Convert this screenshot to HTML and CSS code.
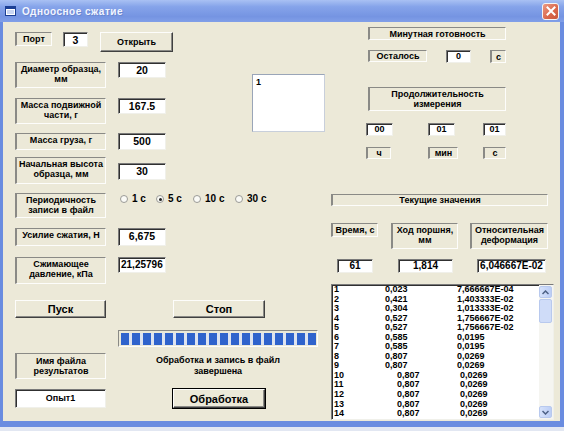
FILE: index.html
```html
<!DOCTYPE html>
<html lang="ru">
<head>
    <meta charset="UTF-8">
    <title>Одноосное сжатие</title>
    <link rel="stylesheet" href="styles.css">
</head>
<body>
<div class="window">
    <div class="titlebar">
        <svg class="app-icon" width="11" height="10" viewBox="0 0 11 10">
            <rect x="0.5" y="0.5" width="10" height="9" fill="#fff" stroke="#1c3f94"/>
            <rect x="1" y="1" width="9" height="2" fill="#1c3f94"/>
            <rect x="2" y="4" width="7" height="4" fill="#c9d6f3"/>
        </svg>
        <span class="title">Одноосное сжатие</span>
        <div class="close">
            <svg width="10" height="10" viewBox="0 0 10 10">
                <path d="M1.5 1.5 L8.5 8.5 M8.5 1.5 L1.5 8.5" stroke="#fff" stroke-width="2" stroke-linecap="square"/>
            </svg>
        </div>
    </div>

    <div class="client">
        <!-- left part: parameters, buttons, progress -->
        <div class="left-pane">
            <div class="row row-port">
                <div class="lbl lbl-port"><span>Порт</span></div>
                <div class="txt txt-port">3</div>
                <div class="btn btn-open">Открыть</div>
            </div>

            <div class="block-top">
                <div class="params">
                    <div class="row">
                        <div class="lbl param h26"><span>Диаметр образца,</span><span>мм</span></div>
                        <div class="txt field h16">20</div>
                    </div>
                    <div class="row mt10">
                        <div class="lbl param h26"><span>Масса подвижной</span><span>части, г</span></div>
                        <div class="txt field h16">167.5</div>
                    </div>
                    <div class="row mt9">
                        <div class="lbl param h17"><span>Масса груза, г</span></div>
                        <div class="txt field h17">500</div>
                    </div>
                </div>
                <div class="memo">1</div>
            </div>

            <div class="row mt7">
                <div class="lbl param h27"><span>Начальная высота</span><span>образца, мм</span></div>
                <div class="txt field h17 shift6">30</div>
            </div>
            <div class="row mt9">
                <div class="lbl param h25"><span>Периодичность</span><span>записи в файл</span></div>
                <div class="radios">
                    <span class="radio r1"><i class="dot"></i>1 с</span>
                    <span class="radio r2"><i class="dot checked"></i>5 с</span>
                    <span class="radio r3"><i class="dot"></i>10 с</span>
                    <span class="radio"><i class="dot"></i>30 с</span>
                </div>
            </div>
            <div class="row mt10">
                <div class="lbl param h18"><span>Усилие сжатия, Н</span></div>
                <div class="txt field h18">6,675</div>
            </div>
            <div class="row mt11">
                <div class="lbl param h27"><span>Сжимающее</span><span>давление, кПа</span></div>
                <div class="txt field h16 left">21,25796</div>
            </div>

            <div class="row row-run">
                <div class="btn btn-big btn-start">Пуск</div>
                <div class="btn btn-big btn-stop">Стоп</div>
            </div>

            <div class="row">
                <div class="col-file">
                    <div class="lbl param h26 file-lbl"><span>Имя файла</span><span>результатов</span></div>
                    <div class="txt file-name">Опыт1</div>
                </div>
                <div class="col-progress">
                    <div class="progress"><div class="progress-fill"></div></div>
                    <div class="status">Обработка и запись в файл<br>завершена</div>
                    <div class="btn btn-big btn-default">Обработка</div>
                </div>
            </div>
        </div>

        <!-- right part: timers and current values -->
        <div class="right-pane">
            <div class="lbl lbl-ready"><span>Минутная готовность</span></div>
            <div class="row mt10">
                <div class="lbl lbl-left"><span>Осталось</span></div>
                <div class="txt txt-left">0</div>
                <div class="lbl lbl-sec"><span>с</span></div>
            </div>
            <div class="lbl lbl-duration"><span>Продолжительность</span><span>измерения</span></div>
            <div class="row mt12 time-row">
                <div class="txt t1">00</div>
                <div class="txt t2">01</div>
                <div class="txt t3">01</div>
            </div>
            <div class="row mt11 unit-row">
                <div class="lbl u1"><span>ч</span></div>
                <div class="lbl u2"><span>мин</span></div>
                <div class="lbl u3"><span>с</span></div>
            </div>
            <div class="lbl lbl-current"><span>Текущие значения</span></div>
            <div class="row head-row">
                <div class="lbl hd1"><span>Время, с</span></div>
                <div class="lbl hd2"><span>Ход поршня,</span><span>мм</span></div>
                <div class="lbl hd3"><span>Относительная</span><span>деформация</span></div>
            </div>
            <div class="row mt10 val-row">
                <div class="txt v1">61</div>
                <div class="txt v2">1,814</div>
                <div class="txt v3">6,046667E-02</div>
            </div>
            <div class="listbox">
                <div class="list-lines">
                    <div class="ln"><span class="c1">1</span><span class="c2">0,023</span>7,666667E-04</div>
                    <div class="ln"><span class="c1">2</span><span class="c2">0,421</span>1,403333E-02</div>
                    <div class="ln"><span class="c1">3</span><span class="c2">0,304</span>1,013333E-02</div>
                    <div class="ln"><span class="c1">4</span><span class="c2">0,527</span>1,756667E-02</div>
                    <div class="ln"><span class="c1">5</span><span class="c2">0,527</span>1,756667E-02</div>
                    <div class="ln"><span class="c1">6</span><span class="c2">0,585</span>0,0195</div>
                    <div class="ln"><span class="c1">7</span><span class="c2">0,585</span>0,0195</div>
                    <div class="ln"><span class="c1">8</span><span class="c2">0,807</span>0,0269</div>
                    <div class="ln"><span class="c1">9</span><span class="c2">0,807</span>0,0269</div>
                    <div class="ln wide"><span class="c1">10</span><span class="c2">0,807</span>0,0269</div>
                    <div class="ln wide"><span class="c1">11</span><span class="c2">0,807</span>0,0269</div>
                    <div class="ln wide"><span class="c1">12</span><span class="c2">0,807</span>0,0269</div>
                    <div class="ln wide"><span class="c1">13</span><span class="c2">0,807</span>0,0269</div>
                    <div class="ln wide"><span class="c1">14</span><span class="c2">0,807</span>0,0269</div>
                </div>
                <div class="scrollbar">
                    <div class="sb-btn">
                        <svg width="7" height="5" viewBox="0 0 7 5"><path d="M0.5 4 L3.5 1 L6.5 4" fill="none" stroke="#4d6185" stroke-width="1.5"/></svg>
                    </div>
                    <div class="sb-thumb"></div>
                    <div class="sb-track"></div>
                    <div class="sb-btn">
                        <svg width="7" height="5" viewBox="0 0 7 5"><path d="M0.5 1 L3.5 4 L6.5 1" fill="none" stroke="#4d6185" stroke-width="1.5"/></svg>
                    </div>
                </div>
            </div>
        </div>
    </div>
</div>
</body>
</html>
```

FILE: styles.css
```css
body {
    margin: 0;
    background: #fff;
    font-family: "Liberation Sans", Arial, sans-serif;
}

.window {
    width: 564px;
    height: 431px;
    display: flex;
    flex-direction: column;
    background: #6a8ce0;
    box-sizing: border-box;
    padding: 0 4px 6px 3px;
    border-bottom: 4px solid #e2e7f2;
}

/* title bar */
.titlebar {
    height: 22px;
    margin: 0 -4px 0 -3px;
    display: flex;
    align-items: center;
    background: linear-gradient(#a9c1f3, #86a4ea 30%, #7594e2 75%, #819fe8);
}

.app-icon {
    margin-left: 5px;
}

.title {
    margin-left: 6px;
    color: #f2f5ff;
    font-weight: bold;
    font-size: 10px;
    letter-spacing: 0.5px;
    text-shadow: 1px 1px #6a86cf;
}

.close {
    margin-left: auto;
    margin-right: 5px;
    width: 17px;
    height: 17px;
    box-sizing: border-box;
    border: 1px solid #f4f4f4;
    border-radius: 3px;
    background: linear-gradient(135deg, #eb9a84, #d9664a 60%, #c9573c);
    display: flex;
    align-items: center;
    justify-content: center;
}

/* form area */
.client {
    flex: 1;
    display: flex;
    background: #ece9d8;
    font-weight: bold;
    font-size: 9px;
    color: #000;
}

.left-pane {
    width: 322px;
    box-sizing: border-box;
    padding: 10px 0 0 12px;
}

.right-pane {
    width: 223px;
    margin-left: 6px;
    padding-top: 5px;
}

.row {
    display: flex;
    align-items: flex-start;
}

.mt7 { margin-top: 7px; }
.mt9 { margin-top: 9px; }
.mt10 { margin-top: 10px; }
.mt11 { margin-top: 11px; }
.mt12 { margin-top: 12px; }

.h16 { height: 16px; }
.h17 { height: 17px; }
.h18 { height: 18px; }
.h25 { height: 25px; }
.h26 { height: 26px; }
.h27 { height: 27px; }

/* sunken label, one span per text line */
.lbl {
    flex-shrink: 0;
    box-sizing: border-box;
    border: 1px solid;
    border-left-width: 2px;
    border-color: #8a8a86 #fdfdfb #fdfdfb #8a8a86;
    display: flex;
    flex-direction: column;
    align-items: center;
    line-height: 10px;
    padding-top: 1px;
    white-space: nowrap;
}

/* text box */
.txt {
    flex-shrink: 0;
    box-sizing: border-box;
    background: #fff;
    border: 1px solid;
    border-color: #7a7a7a #f0f0ea #f0f0ea #7a7a7a;
    box-shadow: inset 1px 1px #303030;
    text-align: center;
    font-size: 10.5px;
    line-height: 12px;
    padding-top: 1px;
    white-space: nowrap;
}

.btn {
    flex-shrink: 0;
    box-sizing: border-box;
    background: #ece9d8;
    border: 1px solid;
    border-color: #fdfdfb #404040 #404040 #fdfdfb;
    box-shadow: inset -1px -1px #8a8a86;
    display: flex;
    align-items: center;
    justify-content: center;
}

.btn-big {
    width: 92px;
    height: 19px;
    font-size: 11px;
}

.btn-default {
    outline: 1px solid #000;
}

/* port row */
.lbl-port {
    width: 37px;
    height: 14px;
}

.txt-port {
    width: 25px;
    height: 15px;
    margin-left: 11px;
}

.btn-open {
    width: 73px;
    height: 20px;
    margin-left: 12px;
}

.block-top {
    display: flex;
    margin-top: 10px;
}

.params {
    width: 151px;
    flex-shrink: 0;
}

.lbl.param {
    width: 91px;
}

.txt.field {
    width: 48px;
    margin-left: 12px;
}

.txt.left {
    text-align: left;
    padding-left: 2px;
    font-size: 10px;
}

.shift6 {
    margin-top: 6px;
}

.memo {
    width: 73px;
    height: 58px;
    margin: 12px 0 0 86px;
    box-sizing: border-box;
    background: #fff;
    border: 1px solid;
    border-color: #9aa5b8 #c8cfdb #c8cfdb #9aa5b8;
    padding: 2px 3px;
    font-size: 9px;
    line-height: 10px;
}

/* option buttons */
.radios {
    display: flex;
    margin: 1px 0 0 14px;
    font-size: 10px;
    line-height: 10px;
}

.radio {
    display: flex;
    align-items: center;
}

.radio.r1 { width: 36px; }
.radio.r2 { width: 37px; }
.radio.r3 { width: 42px; }

.dot {
    width: 6px;
    height: 6px;
    margin-right: 4px;
    border-radius: 50%;
    border: 1px solid #9a9a96;
    background: #fafaf6;
    position: relative;
}

.dot.checked::after {
    content: "";
    position: absolute;
    left: 1.5px;
    top: 1.5px;
    width: 3px;
    height: 3px;
    border-radius: 50%;
    background: #222;
}

.row-run {
    margin-top: 16px;
}

.btn-start {
    width: 91px;
    height: 18px;
}

.btn-stop {
    height: 18px;
    margin-left: 67px;
}

/* bottom left */
.col-file {
    width: 91px;
}

.file-lbl {
    margin-top: 35px;
    padding-top: 2px;
}

.file-name {
    width: 91px;
    height: 19px;
    margin-top: 10px;
    font-size: 9px;
    padding-top: 2px;
}

.col-progress {
    width: 200px;
    margin-left: 12px;
}

.progress {
    margin-top: 12px;
    height: 17px;
    box-sizing: border-box;
    border: 1px solid;
    border-color: #8a8a86 #fdfdfb #fdfdfb #8a8a86;
    padding: 2px 1px 1px 2px;
}

.progress-fill {
    height: 100%;
    background: repeating-linear-gradient(90deg, #2f63cc 0 8px, #dde3f0 8px 11px);
}

.status {
    margin-top: 8px;
    text-align: center;
    line-height: 11px;
    font-size: 9px;
}

.col-progress .btn-default {
    margin: 12px 0 0 55px;
}

/* right pane */
.lbl-ready {
    width: 138px;
    height: 13px;
    margin-left: 37px;
}

.lbl-left {
    width: 59px;
    height: 12px;
    margin-left: 37px;
    line-height: 9px;
}

.txt-left {
    width: 25px;
    height: 13px;
    margin-left: 19px;
    font-size: 9px;
    line-height: 10px;
    padding-top: 0;
}

.lbl-sec {
    width: 16px;
    height: 13px;
    margin-left: 19px;
}

.lbl-duration {
    width: 138px;
    height: 24px;
    margin: 24px 0 0 37px;
}

.time-row .txt {
    height: 13px;
    font-size: 9px;
    line-height: 10px;
    padding-top: 0;
}

.t1 { width: 27px; margin-left: 35px; }
.t2 { width: 27px; margin-left: 35px; }
.t3 { width: 23px; margin-left: 28px; }

.unit-row .lbl {
    height: 12px;
    line-height: 9px;
}

.u1 { width: 25px; margin-left: 35px; }
.u2 { width: 30px; margin-left: 37px; }
.u3 { width: 23px; margin-left: 25px; }

.lbl-current {
    width: 217px;
    height: 12px;
    margin-top: 35px;
    line-height: 9px;
}

.head-row {
    margin-top: 17px;
}

.hd1 { width: 47px; height: 14px; }
.hd2 { width: 67px; height: 26px; margin-left: 13px; }
.hd3 { width: 78px; height: 26px; margin-left: 12px; }

.val-row .txt {
    height: 14px;
    font-size: 10px;
    line-height: 11px;
    padding-top: 0;
}

.v1 { width: 36px; margin-left: 6px; }
.v2 { width: 55px; margin-left: 25px; }
.v3 { width: 69px; margin-left: 24px; font-size: 9.5px; }

/* results list */
.listbox {
    margin-top: 11px;
    width: 223px;
    height: 136px;
    box-sizing: border-box;
    background: #fff;
    border: 1px solid;
    border-color: #7a7a7a #f0f0ea #f0f0ea #7a7a7a;
    box-shadow: inset 1px 1px #303030;
    display: flex;
}

.list-lines {
    flex: 1;
    padding: 0 0 0 2px;
    font-size: 9px;
    line-height: 9.55px;
}

.ln {
    display: flex;
    white-space: nowrap;
}

.c1 { width: 51px; }
.c2 { width: 72px; }
.ln.wide .c1 { width: 63px; }
.ln.wide .c2 { width: 63px; }

.scrollbar {
    width: 13px;
    display: flex;
    flex-direction: column;
    background: #f5f5f1;
    padding: 1px 1px 1px 0;
}

.sb-btn {
    height: 12px;
    border-radius: 2px;
    background: linear-gradient(90deg, #d6e2fb, #bccef6);
    border: 1px solid #b8c9ee;
    box-sizing: border-box;
    display: flex;
    align-items: center;
    justify-content: center;
}

.sb-thumb {
    margin-top: 1px;
    height: 24px;
    border-radius: 2px;
    background: #cfdcf8;
    border: 1px solid #b8c9ee;
    box-sizing: border-box;
}

.sb-track {
    flex: 1;
}
```
